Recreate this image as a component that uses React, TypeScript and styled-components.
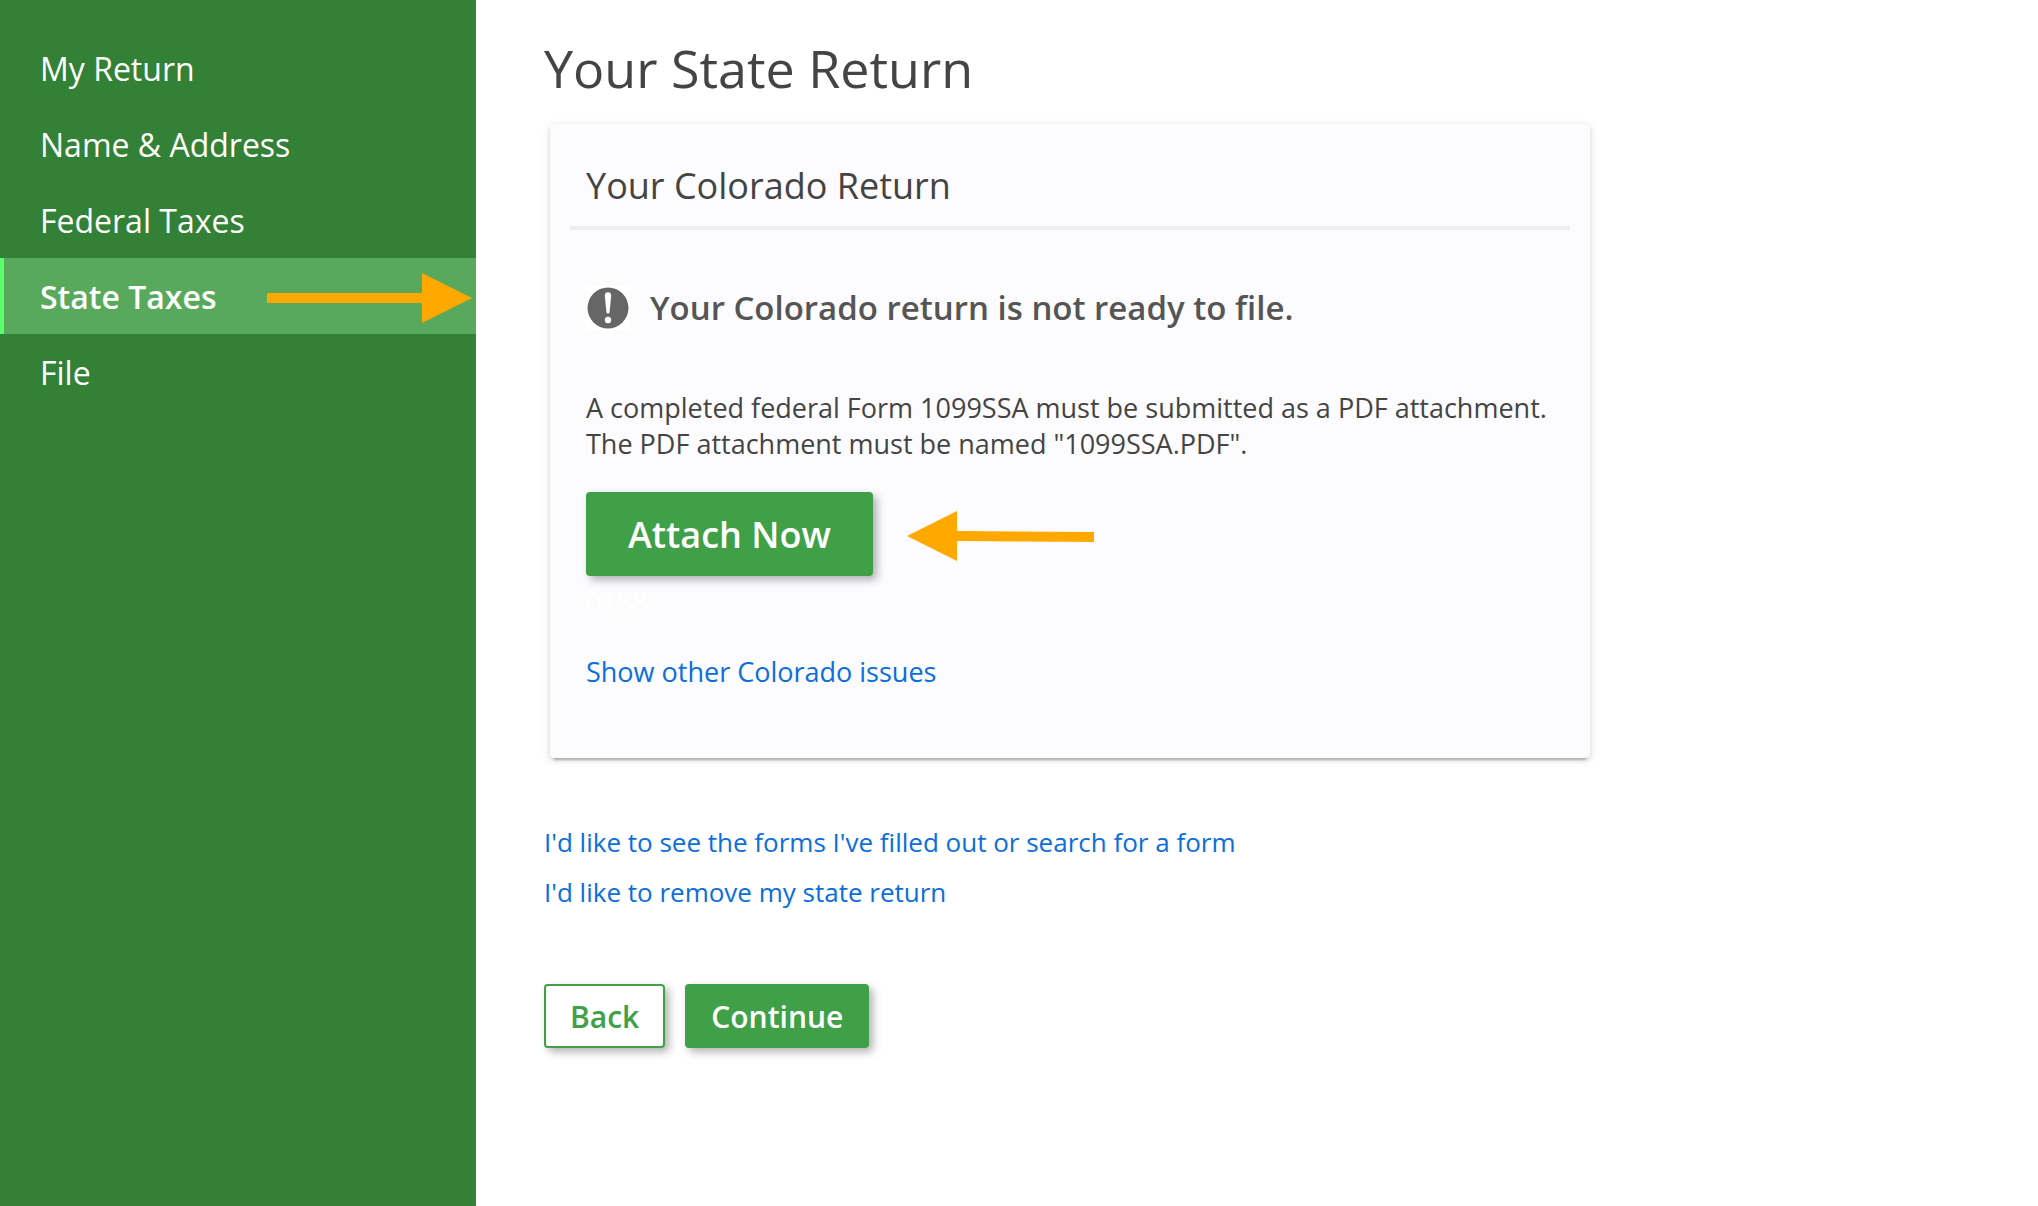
import React from "react";
import styled, { createGlobalStyle, css } from "styled-components";

const GlobalStyle = createGlobalStyle`
  *, *::before, *::after { box-sizing: border-box; }
  body {
    margin: 0;
    background: #fff;
    color: #444;
    font-family: "Open Sans", "Noto Sans", sans-serif;
    font-size: 26px;
    line-height: 36px;
  }
  h1, h2, p, ul { margin: 0; padding: 0; }
`;

const Page = styled.div`
  display: flex;
  min-height: 100vh;
`;

const Sidebar = styled.nav`
  flex: 0 0 476px;
  padding-top: 30px;
  background: #328136;
`;

const NavList = styled.ul`
  list-style: none;
`;

const NavLink = styled.a<{ $active?: boolean }>`
  display: flex;
  align-items: center;
  justify-content: space-between;
  height: 76px;
  padding: 2px 4px 0 36px;
  border-left: 4px solid transparent;
  color: #fff;
  font-size: 32px;
  text-decoration: none;
  ${({ $active }) =>
    $active &&
    css`
      background: #58a95c;
      border-left-color: #5dff6a;
      font-weight: 600;
    `}
`;

const Arrow = styled.svg`
  display: block;
  flex: none;
  fill: #ffa900;
`;

const Main = styled.main`
  flex: 1;
  min-width: 0;
  padding: 32px 68px;
`;

const Title = styled.h1`
  font-size: 52px;
  font-weight: 400;
  line-height: 72px;
`;

const Card = styled.section`
  max-width: 1040px;
  margin: 20px 6px 0;
  padding: 36px 20px 68px;
  border-radius: 4px;
  background: #fcfcfe;
  box-shadow: 0 6px 2px -4px rgba(0, 0, 0, 0.2), 0 2px 4px rgba(0, 0, 0, 0.12),
    0 2px 10px rgba(0, 0, 0, 0.1);
`;

const CardTitle = styled.h2`
  padding: 0 16px 14px;
  border-bottom: 4px solid #eeeef0;
  font-size: 36px;
  font-weight: 400;
  line-height: 52px;
`;

const CardBody = styled.div`
  padding: 56px 16px 0;
  font-size: 27px;
`;

const Alert = styled.div`
  display: flex;
  align-items: center;
  gap: 20px;
  color: #555;
  font-size: 33px;
  font-weight: 600;
  line-height: 44px;
`;

const AlertIcon = styled.svg`
  flex: none;
  background: #fff;
`;

const Message = styled.p`
  margin-top: 60px;
`;

const Action = styled.div`
  display: flex;
  align-items: center;
  gap: 34px;
  margin-top: 30px;
`;

const Button = styled.button<{ $outline?: boolean; $large?: boolean }>`
  height: ${({ $large }) => ($large ? 84 : 64)}px;
  padding: 0 ${({ $large }) => ($large ? 40 : 24)}px;
  border: 2px solid #3fa048;
  border-radius: 4px;
  background: ${({ $outline }) => ($outline ? "#fff" : "#3fa048")};
  box-shadow: 4px 4px 8px rgba(0, 0, 0, 0.3);
  color: ${({ $outline }) => ($outline ? "#3fa048" : "#fff")};
  font-family: inherit;
  font-size: ${({ $large }) => ($large ? 36 : 30)}px;
  font-weight: 600;
  cursor: pointer;
`;

const Code = styled.p`
  margin-top: 8px;
  color: #fff;
`;

const Link = styled.a`
  color: #0a6edb;
  text-decoration: none;
`;

const CardLink = styled(Link)`
  display: block;
  margin-top: 34px;
`;

const Links = styled.div`
  display: flex;
  flex-direction: column;
  align-items: flex-start;
  gap: 14px;
  margin-top: 66px;
`;

const Footer = styled.div`
  display: flex;
  gap: 20px;
  margin-top: 74px;
`;

const items = ["My Return", "Name & Address", "Federal Taxes", "State Taxes", "File"];

export default function App() {
  return (
    <>
      <GlobalStyle />
      <Page>
        <Sidebar>
          <NavList>
            {items.map((item) => {
              const active = item === "State Taxes";
              return (
                <li key={item}>
                  <NavLink href="#" $active={active} aria-current={active ? "page" : undefined}>
                    {item}
                    {active && (
                      <Arrow width="205" height="52" viewBox="0 0 205 52" aria-hidden="true">
                        <path d="M0 22H155V2L205 27L155 52V32H0Z" />
                      </Arrow>
                    )}
                  </NavLink>
                </li>
              );
            })}
          </NavList>
        </Sidebar>
        <Main>
          <Title>Your State Return</Title>
          <Card>
            <CardTitle>Your Colorado Return</CardTitle>
            <CardBody>
              <Alert>
                <AlertIcon width="44" height="44" viewBox="0 0 44 44" aria-hidden="true">
                  <circle cx="22" cy="22" r="20.5" fill="#666" />
                  <path d="M18.8 9.5a3.2 3.2 0 0 1 6.4 0L23.6 26a1.6 1.6 0 0 1-3.2 0Z" fill="#fff" />
                  <circle cx="22" cy="34" r="3.2" fill="#fff" />
                </AlertIcon>
                Your Colorado return is not ready to file.
              </Alert>
              <Message>
                A completed federal Form 1099SSA must be submitted as a PDF attachment. The PDF
                attachment must be named "1099SSA.PDF".
              </Message>
              <Action>
                <Button type="button" $large>
                  Attach Now
                </Button>
                <Arrow width="187" height="54" viewBox="0 0 187 54" aria-hidden="true">
                  <path d="M0 29L50 4V24L187 25V35L50 34V54Z" />
                </Arrow>
              </Action>
              <Code>0188</Code>
              <CardLink href="#">Show other Colorado issues</CardLink>
            </CardBody>
          </Card>
          <Links>
            <Link href="#">I'd like to see the forms I've filled out or search for a form</Link>
            <Link href="#">I'd like to remove my state return</Link>
          </Links>
          <Footer>
            <Button type="button" $outline>
              Back
            </Button>
            <Button type="button">Continue</Button>
          </Footer>
        </Main>
      </Page>
    </>
  );
}
